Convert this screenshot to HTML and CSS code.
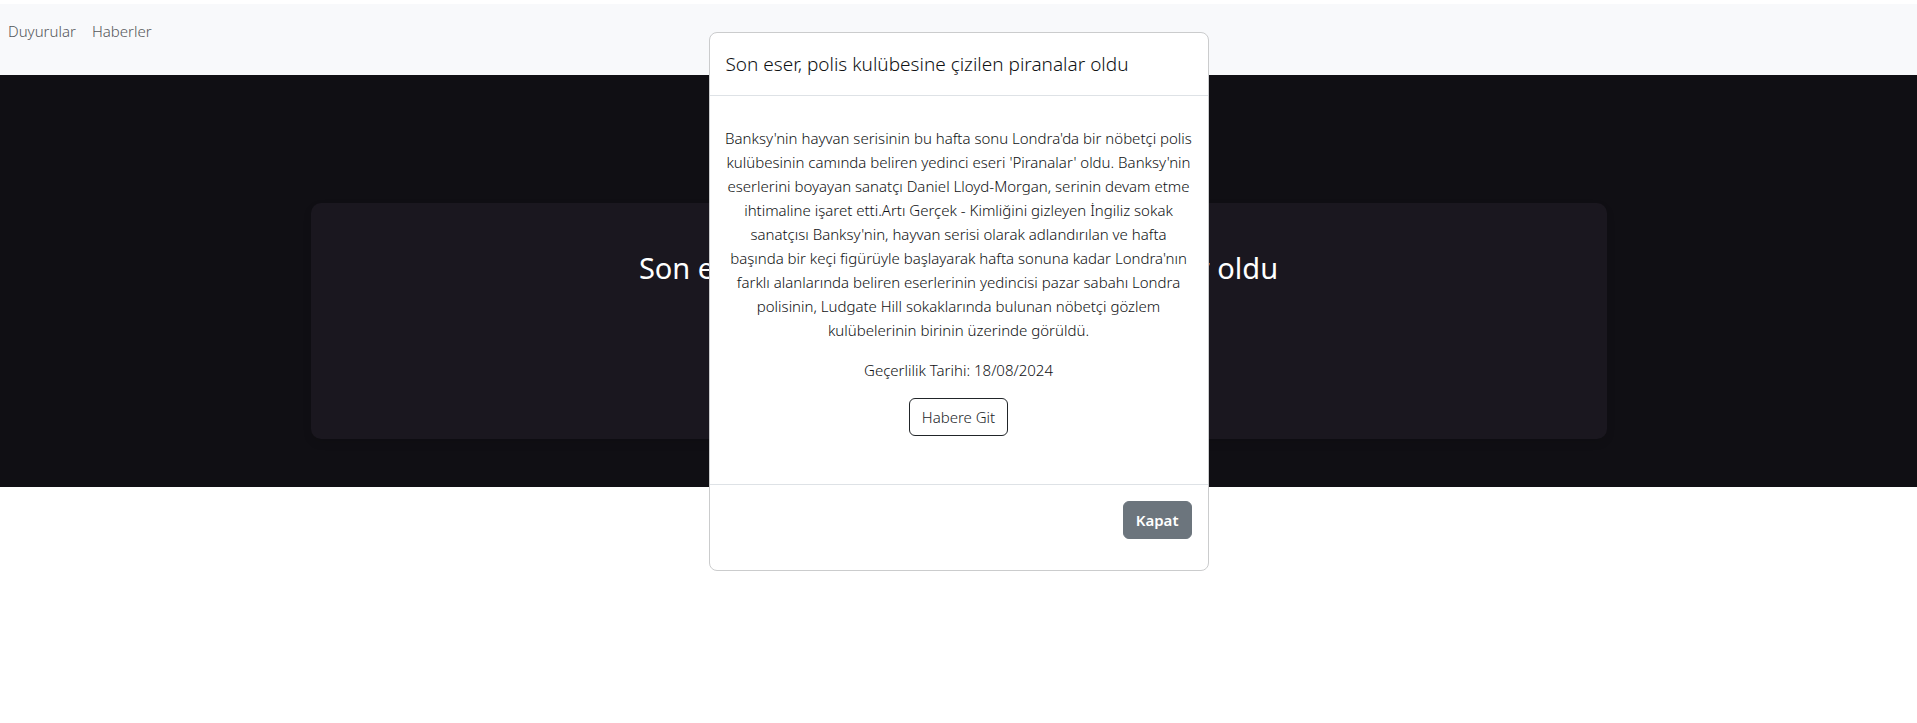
FILE: index.html
```html
<!DOCTYPE html>
<html lang="tr">
<head>
<meta charset="utf-8">
<meta name="viewport" content="width=device-width, initial-scale=1">
<title>Haberler</title>
<link rel="stylesheet" href="styles.css">
</head>
<body>
<nav class="navbar">
  <a class="nav-link" href="#duyurular">Duyurular</a>
  <a class="nav-link" href="#haberler">Haberler</a>
</nav>
<main class="hero">
  <article class="card">
    <h2 class="card-title">Son eser, polis kulübesine çizilen piranalar oldu</h2>
  </article>
</main>
<div class="modal" role="dialog" aria-labelledby="modal-title">
  <header class="modal-header">
    <h5 class="modal-title" id="modal-title">Son eser, polis kulübesine çizilen piranalar oldu</h5>
  </header>
  <div class="modal-body">
    <p class="modal-text">Banksy'nin hayvan serisinin bu hafta sonu Londra'da bir nöbetçi polis<br>
      kulübesinin camında beliren yedinci eseri 'Piranalar' oldu. Banksy'nin<br>
      eserlerini boyayan sanatçı Daniel Lloyd-Morgan, serinin devam etme<br>
      ihtimaline işaret etti.Artı Gerçek - Kimliğini gizleyen İngiliz sokak<br>
      sanatçısı Banksy'nin, hayvan serisi olarak adlandırılan ve hafta<br>
      başında bir keçi figürüyle başlayarak hafta sonuna kadar Londra'nın<br>
      farklı alanlarında beliren eserlerinin yedincisi pazar sabahı Londra<br>
      polisinin, Ludgate Hill sokaklarında bulunan nöbetçi gözlem<br>
      kulübelerinin birinin üzerinde görüldü.</p>
    <p class="modal-text">Geçerlilik Tarihi: 18/08/2024</p>
    <a class="btn btn-outline" href="#haber">Habere Git</a>
  </div>
  <footer class="modal-footer">
    <button class="btn btn-secondary" type="button">Kapat</button>
  </footer>
</div>
</body>
</html>
```
FILE: styles.css
```css
* {
  box-sizing: border-box;
}

body {
  margin: 0;
  padding-top: 4px;
  background: #fff;
  color: #101214;
  font-family: "Noto Sans", "Open Sans", sans-serif;
  font-size: 15px;
  font-weight: 350;
  line-height: 24px;
}

.navbar {
  display: flex;
  gap: 16px;
  padding: 15px 8px 32px;
  background: #f8f9fb;
}

.nav-link {
  color: #55575a;
  text-decoration: none;
}

.hero {
  padding: 128px 12px 48px;
  background: #100f14;
}

.card {
  max-width: 1296px;
  min-height: 236px;
  margin: 0 auto;
  padding: 45px 48px;
  border-radius: 10px;
  background: #1a171f;
  box-shadow: 0 4px 8px rgba(0, 0, 0, 0.1);
  color: #fff;
  text-align: center;
}

.card-title {
  margin: 0;
  font-size: 29px;
  font-weight: 400;
  line-height: 40px;
}

.modal {
  position: absolute;
  top: 32px;
  left: 0;
  right: 0;
  width: 500px;
  max-width: 100%;
  margin: 0 auto;
  border: 1px solid #cbcccd;
  border-radius: 8px;
  background: #fff;
  background-clip: padding-box;
}

.modal-header {
  padding: 16px;
  border-bottom: 1px solid #dee2e6;
}

.modal-title {
  margin: 0;
  font-size: 19px;
  font-weight: 300;
  line-height: 30px;
}

.modal-body {
  padding: 30px 8px 48px;
  font-weight: 300;
  text-align: center;
}

.modal-text {
  margin: 0 0 16px;
}

.modal-footer {
  display: flex;
  justify-content: flex-end;
  padding: 16px 16px 31px;
  border-top: 1px solid #dee2e6;
}

.btn {
  display: inline-block;
  padding: 6px 12px;
  border: 1px solid;
  border-radius: 6px;
  font: inherit;
  text-decoration: none;
  vertical-align: top;
}

.btn-outline {
  border-color: #212529;
  color: #212529;
}

.btn-secondary {
  border-color: #6c757d;
  background: #6c757d;
  color: #fff;
  font-weight: 600;
}
```
